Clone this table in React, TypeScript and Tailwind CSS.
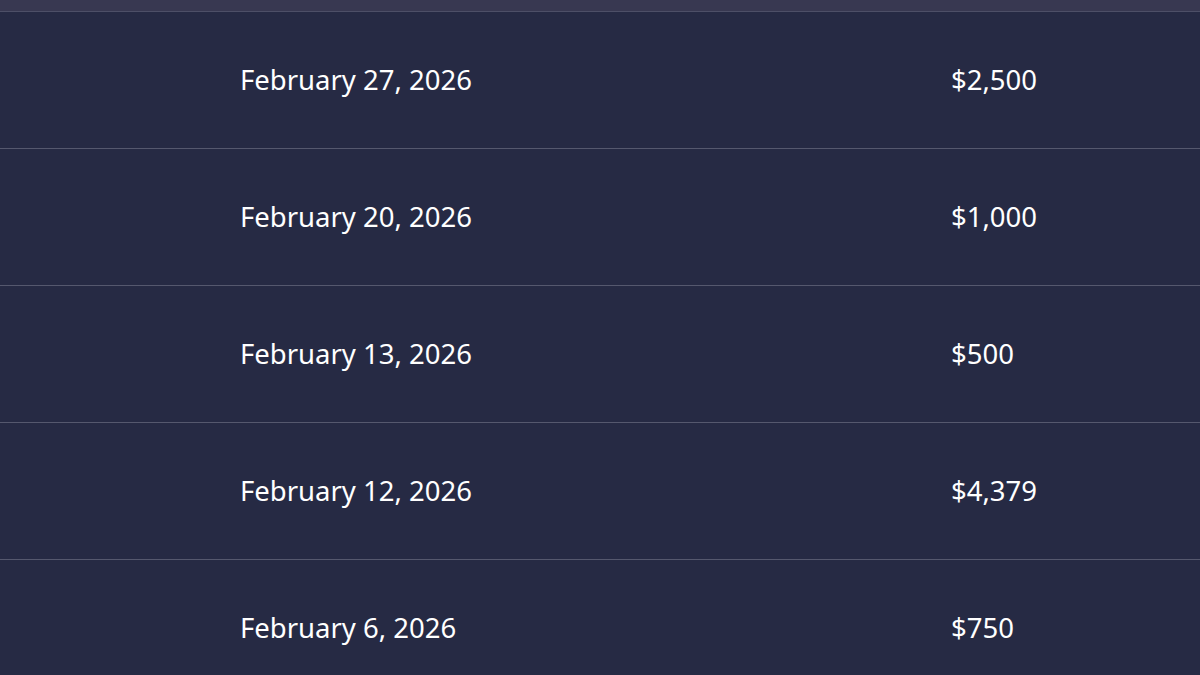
const rows = [
  { date: "February 27, 2026", amount: "$2,500" },
  { date: "February 20, 2026", amount: "$1,000" },
  { date: "February 13, 2026", amount: "$500" },
  { date: "February 12, 2026", amount: "$4,379" },
  { date: "February 6, 2026", amount: "$750" },
];

const App = () => {
  return (
    <div className="w-[1200px] h-[675px] overflow-hidden bg-[#262a44] font-['Noto_Sans',sans-serif] text-white">
      <div className="h-[12px] bg-[#383851] border-b border-[#4d4f67]" />
      {rows.map((row) => (
        <div
          key={row.date}
          className="flex h-[137px] items-center border-b border-[#55586e] pl-[240px]"
        >
          <span className="w-[711px] text-[27.5px] leading-none">{row.date}</span>
          <span className="text-[27.5px] leading-none">{row.amount}</span>
        </div>
      ))}
    </div>
  );
};

export default App;
